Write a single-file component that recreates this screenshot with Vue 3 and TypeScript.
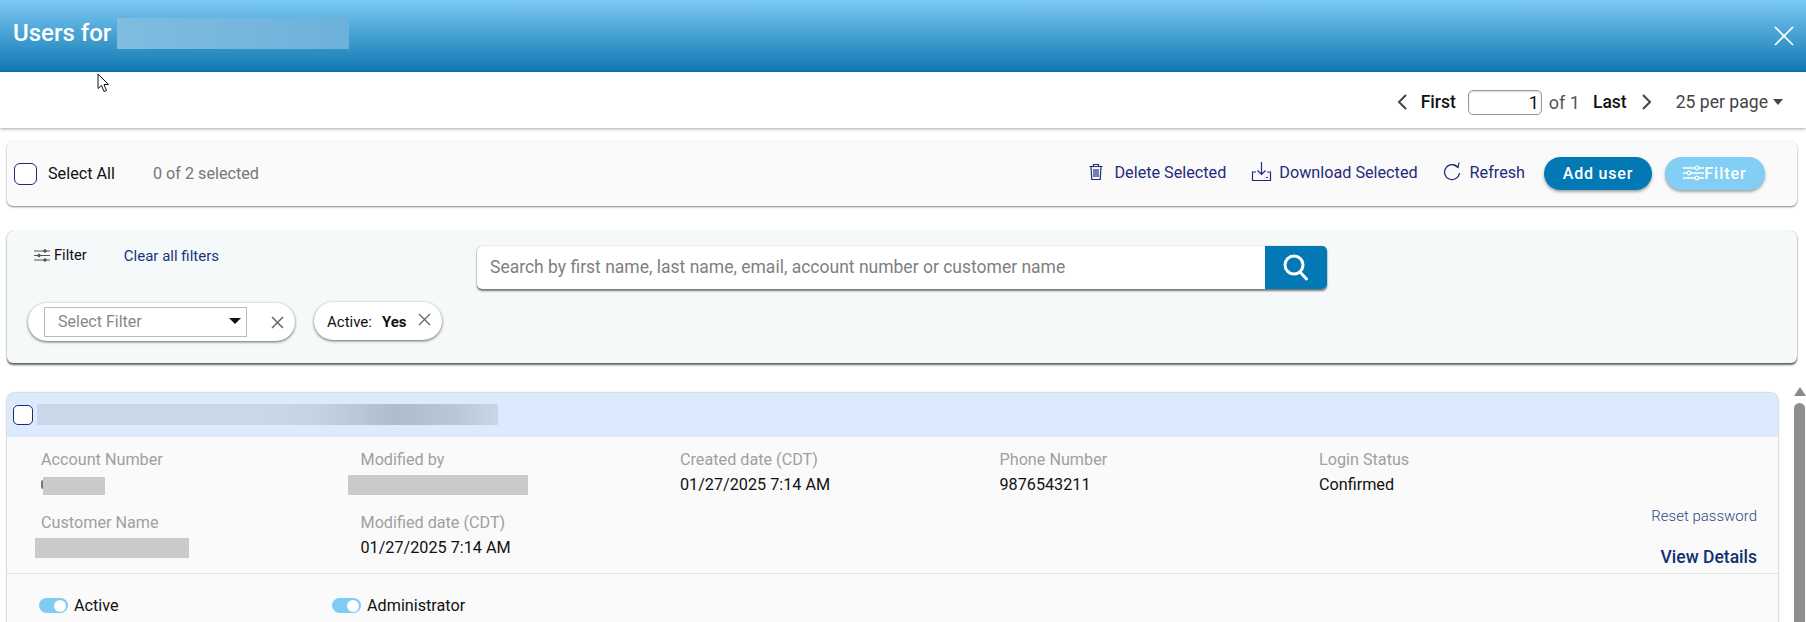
<script setup lang="ts">
interface Cell { label: string; value?: string; redact?: string }
const topCells: Cell[] = [
  { label: 'Account Number', redact: 'r-acct' },
  { label: 'Modified by', redact: 'r-mod' },
  { label: 'Created date (CDT)', value: '01/27/2025 7:14 AM' },
  { label: 'Phone Number', value: '9876543211' },
  { label: 'Login Status', value: 'Confirmed' },
]
const bottomCells: Cell[] = [
  { label: 'Customer Name', redact: 'r-cust' },
  { label: 'Modified date (CDT)', value: '01/27/2025 7:14 AM' },
]
</script>

<template>
  <div class="page">
    <header class="title-bar">
      <h1 class="title">Users for</h1>
      <span class="title-redact"></span>
      <svg class="close" width="22" height="22" viewBox="0 0 22 22"><path d="M2 2 20 20M20 2 2 20" stroke="#fff" stroke-width="1.7" fill="none"/></svg>
    </header>

    <nav class="pager">
      <svg class="chev" width="12" height="18" viewBox="0 0 12 18"><path d="M10 2 3 9l7 7" fill="none" stroke="#444" stroke-width="2"/></svg>
      <span class="pg-strong first">First</span>
      <span class="pg-input">1</span>
      <span class="pg-of">of 1</span>
      <span class="pg-strong last">Last</span>
      <svg class="chev" width="12" height="18" viewBox="0 0 12 18"><path d="M2 2l7 7-7 7" fill="none" stroke="#444" stroke-width="2"/></svg>
      <span class="per-page">25 per page</span>
      <span class="caret"></span>
    </nav>

    <section class="actions">
      <span class="check big"></span>
      <span class="select-all">Select All</span>
      <span class="count">0 of 2 selected</span>
      <span class="spacer"></span>
      <a class="act act-del">
        <svg width="16" height="20" viewBox="0 0 16 20" fill="none" stroke="#1f2a7c" stroke-width="1.2"><path d="M1.5 4.5h13M5.5 4.5V2.5h5v2M3 4.5l.8 13h8.4l.8-13M6 7v8M8 7v8M10 7v8"/></svg>
        Delete Selected
      </a>
      <a class="act act-down">
        <svg width="21" height="22" viewBox="0 0 21 22" fill="none" stroke="#1f2a7c" stroke-width="1.2"><path d="M10.5 1v12M6.5 9.500l4 4 4-4M5 11H1.500v8.500h18V11H16"/><path d="M15 16.500h2"/></svg>
        Download Selected
      </a>
      <a class="act act-ref">
        <svg width="18" height="20" viewBox="0 0 18 20" fill="none" stroke="#1f2a7c" stroke-width="1.2"><path d="M15 5.500A7.500 7.500 0 1 0 16.500 11"/><path d="M10.500 2.500 15 5.500l1-5"/></svg>
        Refresh
      </a>
      <button class="btn add">Add user</button>
      <button class="btn filt">
        <svg width="21" height="18" viewBox="0 0 21 18" fill="none" stroke="#fff" stroke-width="1.300"><path d="M0 4h21M0 9h21M0 14h21"/><circle cx="14" cy="4" r="1.800" fill="#82cef5"/><circle cx="6" cy="9" r="1.800" fill="#82cef5"/><circle cx="14" cy="14" r="1.800" fill="#82cef5"/></svg>
        Filter
      </button>
    </section>

    <section class="filters">
      <div class="f-col">
        <div class="f-head">
          <span class="f-title">
            <svg width="16" height="13" viewBox="0 0 16 13" fill="none" stroke="#555" stroke-width="1"><path d="M0 2h16M0 6.500h16M0 11h16"/><circle cx="11" cy="2" r="1.300" fill="#555"/><circle cx="5" cy="6.500" r="1.300" fill="#555"/><circle cx="11" cy="11" r="1.300" fill="#555"/></svg>
            Filter
          </span>
          <a class="clear">Clear all filters</a>
        </div>
        <div class="chips">
          <div class="chip chip-select">
            <span class="fake-select">Select Filter<i class="sel-caret"></i></span>
            <svg width="13" height="13" viewBox="0 0 13 13"><path d="M1 1l11 11M12 1 1 12" stroke="#666" stroke-width="1.500"/></svg>
          </div>
          <div class="chip chip-active">
            <span class="a-label">Active:</span>
            <b class="a-val">Yes</b>
            <svg width="13" height="13" viewBox="0 0 13 13"><path d="M1 1l11 11M12 1 1 12" stroke="#666" stroke-width="1.300"/></svg>
          </div>
        </div>
      </div>
      <div class="search">
        <span class="search-text">Search by first name, last name, email, account number or customer name</span>
        <span class="search-btn">
          <svg width="28" height="27" viewBox="0 0 28 27" fill="none" stroke="#fff" stroke-width="3"><circle cx="12" cy="11" r="9"/><path d="M18 18l6.500 7" stroke-linecap="round"/></svg>
        </span>
      </div>
    </section>

    <div class="list">
      <article class="user-card">
        <div class="card-head">
          <span class="check small"></span>
          <span class="head-redact"></span>
        </div>
        <div class="card-body">
          <div class="grid">
            <div v-for="c in topCells" :key="c.label" class="cell">
              <div class="lbl">{{ c.label }}</div>
              <div v-if="c.value" class="val">{{ c.value }}</div>
              <div v-else class="redact" :class="c.redact"></div>
            </div>
          </div>
          <div class="row2">
            <div class="grid narrow">
              <div v-for="c in bottomCells" :key="c.label" class="cell">
                <div class="lbl">{{ c.label }}</div>
                <div v-if="c.value" class="val">{{ c.value }}</div>
                <div v-else class="redact" :class="c.redact"></div>
              </div>
            </div>
            <div class="links">
              <a class="reset">Reset password</a>
              <a class="details">View Details</a>
            </div>
          </div>
        </div>
        <div class="toggles">
          <span class="tg tg-a"><i class="switch"></i>Active</span>
          <span class="tg tg-b"><i class="switch"></i>Administrator</span>
        </div>
      </article>
      <div class="scrollbar">
        <i class="sb-arrow"></i>
        <i class="sb-thumb"></i>
      </div>
    </div>

    <svg class="cursor" width="13" height="20" viewBox="0 0 13 20"><path d="M1 1v14.500l3.500-3 2.500 6 2.500-1-2.500-6h4.500z" fill="#fff" stroke="#111" stroke-width="1"/></svg>
  </div>
</template>

<style>
html, body { margin: 0; background: #fff; }
</style>

<style scoped>
.page { position: relative; width: 1806px; height: 622px; overflow: hidden; background: #fff; font-family: Roboto, "Liberation Sans", sans-serif; font-size: 16px; color: #111; }
a { cursor: pointer; }

.title-bar { height: 72px; display: flex; align-items: center; padding: 0 11px 7px 13px; box-sizing: border-box; background: linear-gradient(#7cc9f4, #0f77b1); }
.title { margin: 0; font-size: 24px; font-weight: 500; color: #fff; }
.title-redact { width: 232px; height: 31px; margin-left: 6px; margin-top: 1px; background: linear-gradient(90deg, #7fbde0, #6db1da); }
.close { margin-left: auto; margin-top: 6px; margin-right: 0; }

.pager { height: 56px; display: flex; align-items: center; padding: 0 23px 0 0; box-sizing: border-box; justify-content: flex-end; box-shadow: 0 1px 3px rgba(0,0,0,.35); position: relative; font-size: 18px; padding-top: 4px; }
.pg-strong { font-weight: 500; color: #111; font-size: 17.500px; }
.first { margin: 0 12px 0 13px; }
.pg-input { width: 74px; height: 25px; box-sizing: border-box; border: 1px solid #999; border-radius: 5px; text-align: right; padding-right: 2px; line-height: 23px; box-shadow: inset 0 1px 2px rgba(0,0,0,.15); }
.pg-of { margin: 0 13px 0 7px; color: #555; }
.last { margin-right: 14px; }
.per-page { margin-left: 23px; color: #444; font-size: 17.600px; }
.caret { margin-left: 5px; width: 0; height: 0; border: 5.500px solid transparent; border-top: 6px solid #444; border-bottom: 0; }

.actions { margin: 13px 9px 0 7px; height: 65px; display: flex; align-items: center; padding: 0 32px 0 7px; box-sizing: border-box; background: #fafafa; border-radius: 6px; box-shadow: 0 1px 2px rgba(0,0,0,.5); }
.check { display: block; box-sizing: border-box; background: #fff; border: 1px solid #1b2a7b; }
.check.big { width: 23px; height: 22px; border-radius: 6px; }
.select-all { margin-left: 11px; font-size: 16.200px; }
.count { margin-left: 38px; font-size: 16.200px; color: #777; }
.spacer { flex: 1; }
.act { display: flex; align-items: center; gap: 8px; font-size: 16.200px; color: #1f2a7c; margin-top: -3px; }
.act-del { margin-right: 25px; }
.act-del svg { margin-right: 3px; }
.act-down { margin-right: 25px; gap: 7px; }
.act-ref { margin-right: 19px; gap: 9px; }
.btn { height: 33px; border: 0; border-radius: 17px; color: #fff; font: 500 16px Roboto, sans-serif; letter-spacing: .8px; display: flex; align-items: center; justify-content: center; box-shadow: 0 2px 3px rgba(0,0,0,.35); padding: 0; margin-top: -1px; }
.add { width: 108px; background: #0278b5; }
.filt { width: 100px; margin-left: 13px; background: #82cef5; letter-spacing: 1px; }

.filters { margin: 25px 9px 0 7px; height: 132px; box-sizing: border-box; display: flex; padding: 14px 0 0 0; background: #f5f9fa; border-radius: 6px; box-shadow: 0 0 1px rgba(0,0,0,.35), 0 2px 2px rgba(0,0,0,.6); }
.f-col { width: 470px; display: flex; flex-direction: column; }
.f-head { display: flex; align-items: center; height: 22px; padding-left: 27px; }
.f-title { display: flex; align-items: center; gap: 4px; font-size: 14.700px; margin-top: -2px; }
.clear { margin-left: 37px; font-size: 15px; color: #1b357a; }
.chips { display: flex; gap: 18px; align-items: flex-start; padding: 36px 0 0 21px; }
.chip { background: #fff; display: flex; align-items: center; box-shadow: 0 1px 3px rgba(0,0,0,.6); box-sizing: border-box; }
.chip-select { width: 267px; height: 38px; border-radius: 19px; padding-left: 16px; }
.fake-select { position: relative; width: 203px; height: 30px; box-sizing: border-box; border: 1px solid #bbb; padding-left: 13px; line-height: 28px; font-size: 16px; color: #888; margin-right: 24px; }
.sel-caret { position: absolute; right: 5px; top: 10px; width: 0; height: 0; border: 6px solid transparent; border-top: 6px solid #111; border-bottom: 0; }
.chip-active { width: 128px; height: 38px; margin-top: -1px; margin-left: 1px; border-radius: 19px; padding-left: 13px; font-size: 15px; }
.a-label, .a-val { position: relative; top: 1px; }
.a-val { margin-left: 10px; margin-right: 11px; font-weight: 700; }
.chip-active svg { margin-top: -4px; }
.search { width: 850px; height: 43px; margin-top: 1px; display: flex; align-items: center; background: #fff; border-radius: 5px; box-shadow: 0 0 1px rgba(0,0,0,.5), 0 2px 2px rgba(0,0,0,.5); overflow: hidden; }
.search-text { flex: 1; padding-left: 13px; font-size: 17.500px; color: #808080; margin-top: -2px; }
.search-btn { width: 62px; height: 43px; display: flex; align-items: center; justify-content: center; background: #0278b5; }

.list { margin-top: 30px; display: flex; align-items: flex-start; padding-left: 7px; }
.user-card { width: 1771px; height: 260px; flex: none; background: #fafafa; border-radius: 8px 8px 0 0; box-shadow: 0 0 2px rgba(0,0,0,.5); overflow: hidden; }
.card-head { height: 44px; display: flex; align-items: center; background: #dbeafc; padding-left: 6px; padding-bottom: 1px; box-sizing: border-box; }
.check.small { width: 20px; height: 20px; border-radius: 5px; }
.head-redact { width: 461px; height: 21px; margin-left: 4px; background: linear-gradient(90deg, #c8d8e9 0 50%, #c5d3e2 60%, #aebccd 78%, #b8c7d8 90%, #c8d6e6 100%); }
.card-body { height: 137px; box-sizing: border-box; padding: 13px 21px 0 34px; border-bottom: 1px solid #dde4e4; }
.grid { display: grid; grid-template-columns: repeat(5, 319.500px); }
.grid.narrow { grid-template-columns: repeat(2, 319.500px); }
.row2 { display: flex; justify-content: space-between; margin-top: 10px; }
.cell { height: 53px; }
.lbl { font-size: 16.200px; line-height: 19px; color: #a0a0a0; }
.val { font-size: 16.200px; line-height: 19px; color: #111; margin-top: 6px; }
.redact { background: #cacaca; height: 20px; }
.r-acct { position: relative; width: 62px; margin: 8px 0 0 2px; height: 18px; }
.r-acct::before { content: ""; position: absolute; left: -2px; top: 3px; width: 2px; height: 9px; border-radius: 2px 0 0 2px; background: #777; }
.r-mod { width: 180px; margin: 6px 0 0 -13px; }
.r-cust { width: 154px; margin: 6px 0 0 -6px; }
.links { display: flex; flex-direction: column; align-items: flex-end; margin-top: -6px; }
.reset { font-size: 15px; line-height: 18px; color: #2b4a86; font-weight: 300; }
.details { margin-top: 22px; font-size: 17.500px; line-height: 20px; font-weight: 500; color: #12306f; }
.toggles { display: flex; padding: 22px 0 0 32px; font-size: 16.200px; }
.tg { display: flex; align-items: center; gap: 6px; }
.tg-a { width: 293px; }
.switch { position: relative; display: block; width: 29px; height: 15px; border-radius: 8px; background: #7fcbf3; }
.switch::after { content: ""; position: absolute; right: 2px; top: 1.500px; width: 12px; height: 12px; border-radius: 50%; background: #fff; }

.scrollbar { margin-left: 15px; width: 13px; display: flex; flex-direction: column; align-items: center; margin-top: -6px; }
.sb-arrow { width: 0; height: 0; border: 6px solid transparent; border-bottom: 9px solid #8a8a8a; border-top: 0; }
.sb-thumb { width: 11px; height: 230px; margin-top: 7px; border-radius: 6px 6px 0 0; background: #8e8e8e; }

.cursor { position: absolute; left: 97px; top: 73px; }
</style>
